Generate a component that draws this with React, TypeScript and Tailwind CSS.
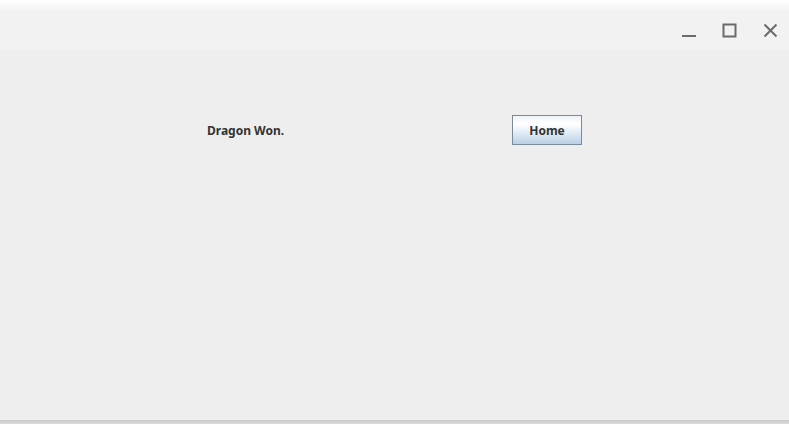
export default function App() {
  return (
    <div className="w-[789px] h-[424px] flex flex-col bg-white overflow-hidden" style={{ fontFamily: '"Noto Sans", "DejaVu Sans", sans-serif' }}>
      {/* window shadow above title bar */}
      <div className="h-[10px] bg-gradient-to-b from-white to-[#f4f4f4]" />

      {/* title bar */}
      <div className="h-[40px] bg-[#f2f2f2] flex items-center justify-end pr-[11px] gap-[26px]">
        <svg width="15" height="15" viewBox="0 0 15 15" className="mt-[1px]">
          <line x1="1" y1="13" x2="15" y2="13" stroke="#6b6b6b" strokeWidth="2" />
        </svg>
        <svg width="15" height="15" viewBox="0 0 15 15">
          <rect x="1.5" y="1.5" width="12" height="12" fill="none" stroke="#6b6b6b" strokeWidth="2" />
        </svg>
        <svg width="15" height="15" viewBox="0 0 15 15">
          <path d="M1.5 1.5 L13.5 13.5 M13.5 1.5 L1.5 13.5" stroke="#6b6b6b" strokeWidth="2" />
        </svg>
      </div>

      {/* content */}
      <div className="flex-1 bg-[#eeeeee] pt-[65px] pl-[207px]">
        <div className="flex items-center h-[30px]">
          <span className="w-[305px] pt-[2px] text-[12px] font-bold text-[#333333] leading-none">Dragon Won.</span>
          <button className="w-[70px] h-[30px] pt-[2px] border border-[#7a8a99] bg-gradient-to-b from-[#eef3f8] via-white via-30% to-[#b9d0e6] text-[12px] font-bold text-[#333333] leading-none">
            Home
          </button>
        </div>
      </div>

      {/* bottom shadow */}
      <div className="h-[4px] bg-gradient-to-b from-[#c9c9c9] to-[#dcdcdc]" />
    </div>
  );
}
